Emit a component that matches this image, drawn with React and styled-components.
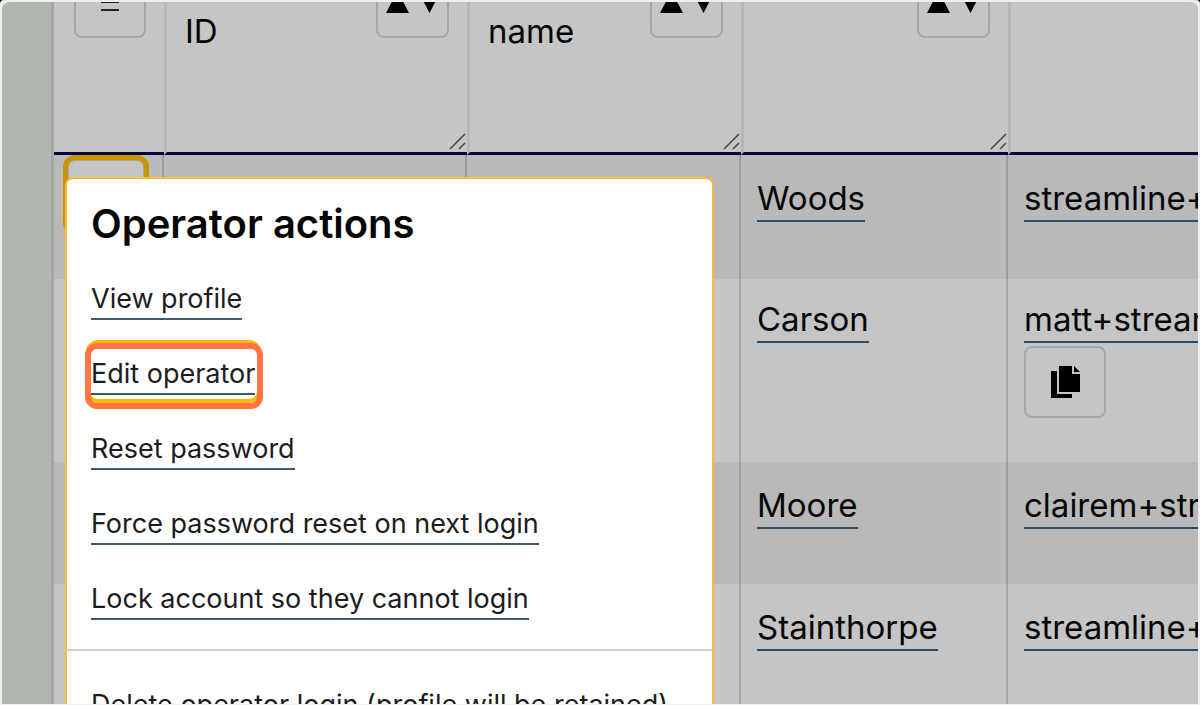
import React from "react";
import styled, { createGlobalStyle } from "styled-components";

const GlobalStyle = createGlobalStyle`
  * { box-sizing: border-box; }
  body {
    margin: 0;
    background: #000;
    color: #060606;
    font-family: Inter, "Liberation Sans", sans-serif;
  }
`;

const Frame = styled.div`
  height: 100vh;
  padding: 2px 2px 1px;
  border-radius: 4px 4px 0 0;
  background: #eeeef5;
`;

const Screen = styled.main`
  position: relative;
  display: flex;
  height: 100%;
  overflow: hidden;
  border-radius: 8px 8px 0 0;
  background: #c5c5c5;
`;

const Sidebar = styled.aside`
  flex: 0 0 52px;
  border-right: 3px solid #a3a6a2;
  background: #b0b7ae;
`;

const TableArea = styled.div`
  flex: 1;
  min-width: 0;
  overflow: hidden;
`;

const Table = styled.table`
  width: 100%;
  margin-top: -36px;
  table-layout: fixed;
  border-collapse: separate;
  border-spacing: 0;
  font-size: 33px;
  line-height: 40px;
`;

const HeadCell = styled.th`
  position: relative;
  height: 189px;
  padding: 0 18px;
  border-left: ${(p) => (p.$first ? 0 : "3px solid #b8b8b8")};
  border-bottom: 3px solid #03053f;
  background: #c5c5c5;
  font-weight: 400;
  text-align: left;
  vertical-align: top;
`;

const HeadContent = styled.div`
  display: flex;
  align-items: flex-start;
  justify-content: space-between;
  padding-left: ${(p) => (p.$first ? "2px" : 0)};
`;

const HeadLabel = styled.span`
  padding-top: 45px;
`;

const IconButton = styled.button`
  display: flex;
  align-items: center;
  justify-content: center;
  width: 73px;
  height: 72px;
  padding: 0;
  border: 2px solid #a8a8a8;
  border-radius: 8px;
  background: transparent;
  color: #000;
`;

const CopyButton = styled(IconButton)`
  width: 82px;
  margin-top: 3px;
`;

const ActiveButton = styled(IconButton)`
  width: 78px;
  background: #c5c5c5;
  outline: 5px solid #c99400;
  outline-offset: -1px;
`;

const Grip = styled.svg`
  position: absolute;
  right: 1px;
  bottom: 2px;
`;

const Row = styled.tr`
  height: ${(p) => p.$height}px;
  background: ${(p) => (p.$shaded ? "#b9b9b9" : "#c5c5c5")};
`;

const Cell = styled.td`
  padding: ${(p) => (p.$compact ? "19px" : "22px")} 0 0 16px;
  border-right: 2px solid rgba(0, 0, 0, 0.15);
  vertical-align: top;
  white-space: nowrap;

  &:last-child { border-right: 0; }
`;

const ActionCell = styled(Cell)`
  padding: 4px 0 0 13px;
`;

const CellLink = styled.a`
  display: ${(p) => (p.$fill ? "block" : "inline-block")};
  padding-bottom: 1px;
  border-bottom: 2px solid #2b4d68;
  color: #060606;
  line-height: 42px;
  text-decoration: none;
`;

const Popover = styled.section`
  position: absolute;
  top: 175px;
  bottom: 0;
  left: 63px;
  width: 649px;
  border: 2px solid #fbb938;
  border-bottom: 0;
  border-radius: 8px 8px 0 0;
  background: #fff;
  overflow: hidden;
`;

const Title = styled.h2`
  margin: 0;
  padding: 21px 24px 0;
  font-size: 40px;
  font-weight: 600;
  line-height: 48px;
`;

const ActionList = styled.ul`
  display: flex;
  flex-direction: column;
  align-items: flex-start;
  gap: 37px;
  margin: 0;
  padding: 34px 24px 29px;
  list-style: none;
`;

const DangerList = styled(ActionList)`
  padding-top: 37px;
  border-top: 2px solid #d2d2d2;
`;

const Action = styled.a`
  position: relative;
  display: block;
  padding-bottom: 2px;
  border-bottom: 2px solid #3d5876;
  color: #1c1c1c;
  font-size: 27px;
  line-height: 34px;
  text-decoration: none;
  white-space: nowrap;
`;

const FocusRing = styled.span`
  position: absolute;
  inset: -17px -6px -10px -5px;
  border: 4px solid #fdb900;
  border-radius: 12px;
`;

const Highlight = styled.span`
  position: absolute;
  inset: -14px -8px -16px -6px;
  border: 6px solid #ff7543;
  border-radius: 12px;
`;

const SortIcon = () => (
  <svg width="56" height="22" viewBox="0 0 56 22" aria-hidden="true">
    <path d="M1 22 12.500 0 24 22ZM33 0h23L44.500 22Z" fill="#000" />
  </svg>
);

const MenuIcon = () => (
  <svg width="18" height="20" viewBox="0 0 18 20" aria-hidden="true">
    <path d="M0 2h18M0 10h18M0 18h18" stroke="#222" strokeWidth="2" />
  </svg>
);

const CopyIcon = () => (
  <svg width="31" height="34" viewBox="0 0 31 34" aria-hidden="true">
    <path d="M1 6h6v23h15v4H1Z" fill="#000" />
    <path d="M9 1h13v8h8v18H9ZM24 1l6 6h-6Z" fill="#000" />
  </svg>
);

const GripIcon = () => (
  <Grip width="17" height="17" viewBox="0 0 17 17" aria-hidden="true">
    <path d="M1 16 16 1M10 16l6-6" stroke="#444" strokeWidth="1.500" />
  </Grip>
);

const columns = [
  { key: "id", label: "ID" },
  { key: "name", label: "name" },
  { key: "surname", label: "" },
];

const operators = [
  { surname: "Woods", email: "streamline+", height: 124, active: true },
  { surname: "Carson", email: "matt+stream", height: 183, copy: true },
  { surname: "Moore", email: "clairem+stre", height: 122 },
  { surname: "Stainthorpe", email: "streamline+", height: 124 },
];

const actions = [
  "View profile",
  "Edit operator",
  "Reset password",
  "Force password reset on next login",
  "Lock account so they cannot login",
];

export default function App() {
  return (
    <>
      <GlobalStyle />
      <Frame>
        <Screen>
          <Sidebar />
          <TableArea>
            <Table>
              <colgroup>
                <col style={{ width: 110 }} />
                <col style={{ width: 303 }} />
                <col style={{ width: 274 }} />
                <col style={{ width: 267 }} />
                <col />
              </colgroup>
              <thead>
                <tr>
                  <HeadCell $first>
                    <HeadContent $first>
                      <IconButton type="button" aria-label="Table menu"><MenuIcon /></IconButton>
                    </HeadContent>
                  </HeadCell>
                  {columns.map((c) => (
                    <HeadCell key={c.key}>
                      <HeadContent>
                        <HeadLabel>{c.label}</HeadLabel>
                        <IconButton type="button" aria-label="Sort"><SortIcon /></IconButton>
                      </HeadContent>
                      <GripIcon />
                    </HeadCell>
                  ))}
                  <HeadCell />
                </tr>
              </thead>
              <tbody>
                {operators.map((o, i) => (
                  <Row key={o.surname} $height={o.height} $shaded={i % 2 === 0}>
                    <ActionCell>
                      {o.active && <ActiveButton type="button" aria-label="Operator menu" />}
                    </ActionCell>
                    <Cell />
                    <Cell />
                    <Cell $compact={o.copy}><CellLink href="#">{o.surname}</CellLink></Cell>
                    <Cell $compact={o.copy}>
                      <CellLink href="#" $fill>{o.email}</CellLink>
                      {o.copy && (
                        <CopyButton type="button" aria-label="Copy email"><CopyIcon /></CopyButton>
                      )}
                    </Cell>
                  </Row>
                ))}
              </tbody>
            </Table>
          </TableArea>
          <Popover aria-label="Operator actions">
            <Title>Operator actions</Title>
            <ActionList>
              {actions.map((label) => (
                <li key={label}>
                  <Action href="#">
                    {label}
                    {label === "Edit operator" && (
                      <>
                        <FocusRing />
                        <Highlight />
                      </>
                    )}
                  </Action>
                </li>
              ))}
            </ActionList>
            <DangerList>
              <li><Action href="#">Delete operator login (profile will be retained)</Action></li>
            </DangerList>
          </Popover>
        </Screen>
      </Frame>
    </>
  );
}
